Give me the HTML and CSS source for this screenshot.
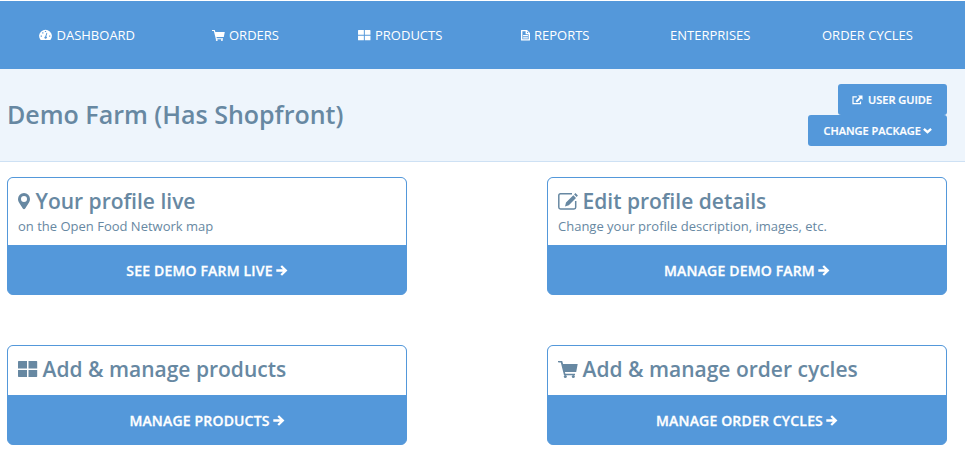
FILE: index.html
```
<!DOCTYPE html>
<html lang="en">
<head>
<meta charset="utf-8">
<title>Demo Farm</title>
<link rel="stylesheet" href="styles.css">
</head>
<body>
<svg class="defs" aria-hidden="true">
  <symbol id="gauge" viewBox="0 0 13 12"><path fill-rule="evenodd" d="M1.300 10.500 A6.400 6.100 0 1 1 11.700 10.500 Q11.300 11 10.800 11 H2.200 Q1.700 11 1.300 10.500Z M1.700 6.500h1.200v1.200H1.700z M3.200 3.200h1.200v1.200H3.200z M5.900 1.900h1.200v1.200H5.900z M10.100 6.500h1.200v1.200h-1.200z M8.300 4 L7.300 7.500 A1.200 1.200 0 1 1 6.200 7.400 L7.500 3.800z"/></symbol>
  <symbol id="cart" viewBox="0 0 20 17"><path d="M0 0h4.200l.9 3H19.700L18.200 11H6.900l.5 1.700H17v1.600H6L2.800 1.600H.8Q0 1.600 0 .8z"/><circle cx="7.300" cy="15.400" r="1.500"/><circle cx="15.300" cy="15.400" r="1.500"/></symbol>
  <symbol id="tiles" viewBox="0 0 20 17"><path d="M.7 0H9v7.500H0V.7Q0 0 .7 0z M10.500 0h8q.7 0 .7.700v6.800h-8.700z M0 9h9v7H.7Q0 16 0 15.300z M10.500 9h8.700v6.300q0 .7-.7.700h-8z"/></symbol>
  <symbol id="report" viewBox="0 0 9 11"><path fill-rule="evenodd" d="M0 .5Q0 0 .5 0H6L9 3v7q0 .5-.5.500h-8Q0 10.500 0 10z M1.400 1.300v7.900h6.200V4.300H4.600V1.300z M6 1.500V3h1.500z M2.100 5h4.800v1.300H2.100z M2.100 7.200h4.800v1.300H2.100z"/></symbol>
  <symbol id="external" viewBox="0 0 11 10"><path fill="none" stroke="currentColor" stroke-width="1.200" d="M4.800 1.800H1v6.800h7.500V6.500"/><path d="M6 .5h4.500v4.500L9 3.600 5 7.400 3.600 6.100 7.600 2z"/></symbol>
  <symbol id="chevron" viewBox="0 0 9 7"><path fill="none" stroke="currentColor" stroke-width="2.300" d="M.9 1.800 4.500 5.200 8.100 1.800"/></symbol>
  <symbol id="pin" viewBox="0 0 12 17"><path fill-rule="evenodd" d="M6 0a6 6 0 0 1 6 6c0 1.500-.5 2.600-1 3.600L7.200 15.500q-1.200 1.500-2.400 0L1 9.600C.5 8.600 0 7.500 0 6a6 6 0 0 1 6-6z M6 3a3 3 0 1 0 0 6 3 3 0 0 0 0-6z"/></symbol>
  <symbol id="edit" viewBox="0 0 20 17"><path fill="none" stroke="currentColor" stroke-width="1.500" d="M14 .8H2.500Q.8.800.8 2.500v11.800q0 1.700 1.700 1.700H16q1.700 0 1.700-1.700V8"/><path d="M7 13.500l1-4 7.300-7.300 2.700 2.700L10.800 12.200z M16.100 1.400l1.300-1.300 2.500 2.500-1.200 1.400z"/></symbol>
  <symbol id="arrow" viewBox="0 0 12 11"><path fill="none" stroke="currentColor" stroke-width="2.300" d="M.3 5.500H9.500 M5.200 1 9.800 5.500 5.200 10"/></symbol>
</svg>

<nav class="nav">
  <a class="nav-item"><svg class="icon gauge"><use href="#gauge"/></svg>DASHBOARD</a>
  <a class="nav-item"><svg class="icon small"><use href="#cart"/></svg>ORDERS</a>
  <a class="nav-item"><svg class="icon small"><use href="#tiles"/></svg>PRODUCTS</a>
  <a class="nav-item"><svg class="icon report"><use href="#report"/></svg>REPORTS</a>
  <a class="nav-item">ENTERPRISES</a>
  <a class="nav-item">ORDER CYCLES</a>
</nav>

<header class="header">
  <h1 class="title">Demo Farm (Has Shopfront)</h1>
  <div class="actions">
    <a class="button guide"><svg class="icon external"><use href="#external"/></svg>USER GUIDE</a>
    <a class="button">CHANGE PACKAGE<svg class="icon chevron"><use href="#chevron"/></svg></a>
  </div>
</header>

<main class="cards">
  <section class="card">
    <div class="card-head tall">
      <h2 class="card-title"><svg class="icon pin"><use href="#pin"/></svg>Your profile live</h2>
      <p class="card-text">on the Open Food Network map</p>
    </div>
    <a class="card-link">SEE DEMO FARM LIVE<svg class="icon arrow"><use href="#arrow"/></svg></a>
  </section>
  <section class="card">
    <div class="card-head tall">
      <h2 class="card-title"><svg class="icon large"><use href="#edit"/></svg>Edit profile details</h2>
      <p class="card-text">Change your profile description, images, etc.</p>
    </div>
    <a class="card-link">MANAGE DEMO FARM<svg class="icon arrow"><use href="#arrow"/></svg></a>
  </section>
  <section class="card">
    <div class="card-head">
      <h2 class="card-title"><svg class="icon large"><use href="#tiles"/></svg>Add &amp; manage products</h2>
    </div>
    <a class="card-link">MANAGE PRODUCTS<svg class="icon arrow"><use href="#arrow"/></svg></a>
  </section>
  <section class="card">
    <div class="card-head">
      <h2 class="card-title"><svg class="icon large"><use href="#cart"/></svg>Add &amp; manage order cycles</h2>
    </div>
    <a class="card-link">MANAGE ORDER CYCLES<svg class="icon arrow"><use href="#arrow"/></svg></a>
  </section>
</main>
</body>
</html>
```
FILE: styles.css
```
* { box-sizing: border-box; }
body {
  margin: 0;
  padding-top: 1px;
  background: #fff;
  color: #6788a2;
  font: 13px/18px "Open Sans", sans-serif;
}
h1, h2, p { margin: 0; }
.defs { display: none; }
.icon { display: block; flex: none; fill: currentColor; }
.nav {
  display: grid;
  grid-template-columns: 173px 146px 162px 150px 152px auto;
  align-items: center;
  height: 68px;
  padding-left: 39px;
  background: #5498da;
  color: #fff;
}
.nav-item { display: flex; align-items: center; white-space: nowrap; }
.gauge { width: 13px; height: 12px; margin-right: 4.5px; }
.small { width: 13px; height: 11px; margin-right: 4px; }
.report { width: 9px; height: 11px; margin: 0 4px 0 1px; }
.header {
  display: flex;
  align-items: center;
  justify-content: space-between;
  height: 93px;
  padding: 0 18px 0 7px;
  background: #eef5fc;
  border-bottom: 1px solid #cee1f4;
}
.title { padding-bottom: 2px; font-size: 25px; line-height: 34px; font-weight: 600; }
.actions { display: flex; flex-direction: column; align-items: flex-end; }
.button {
  display: flex;
  align-items: center;
  height: 31px;
  padding: 0 15px;
  border-radius: 3px;
  background: #5498da;
  color: #fff;
  font-size: 11px;
  font-weight: 600;
  -webkit-text-stroke: 0.2px currentColor;
}
.guide { padding-left: 14px; }
.external { width: 11px; height: 10px; margin-right: 5px; }
.chevron { width: 9px; height: 7px; margin-left: 2px; }
.cards {
  display: grid;
  grid-template-columns: 400px 400px;
  column-gap: 140px;
  row-gap: 50px;
  padding: 15px 0 0 7px;
}
.card {
  overflow: hidden;
  border: 1px solid #5498da;
  border-radius: 6px;
  background: #5498da;
}
.card-head { height: 49px; padding: 9px 10px 0; background: #fff; }
.card-head.tall { height: 67px; }
.card-title {
  display: flex;
  align-items: center;
  font-size: 21px;
  line-height: 28px;
  font-weight: 600;
}
.card-text { margin-top: 2px; }
.large { width: 20px; height: 17px; margin-right: 4.5px; }
.pin { width: 12px; height: 17px; margin-right: 5.5px; }
.card-link {
  display: flex;
  align-items: center;
  justify-content: center;
  height: 49px;
  padding-top: 2px;
  color: #fff;
  font-size: 14px;
  font-weight: 600;
  letter-spacing: 0.17px;
  -webkit-text-stroke: 0.3px currentColor;
}
.arrow { width: 12px; height: 11px; margin-left: 3px; }
```
